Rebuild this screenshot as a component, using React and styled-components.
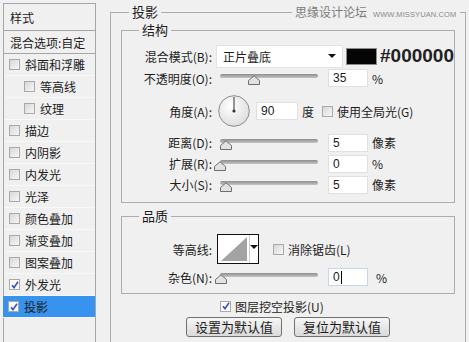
import React from "react";
import styled, { createGlobalStyle } from "styled-components";

const GlobalStyle = createGlobalStyle`
  html, body {
    margin: 0;
    padding: 0;
    background: #f0f0f0;
  }
  body {
    font-family: "Noto Sans CJK SC", "Noto Sans", sans-serif;
    font-size: 12px;
    color: #1c1c1c;
  }
`;

const sideItems = [
  { text: "斜面和浮雕" },
  { text: "等高线", indent: true },
  { text: "纹理", indent: true },
  { text: "描边" },
  { text: "内阴影" },
  { text: "内发光" },
  { text: "光泽" },
  { text: "颜色叠加" },
  { text: "渐变叠加" },
  { text: "图案叠加" },
  { text: "外发光", checked: true },
  { text: "投影", checked: true, selected: true },
];

function CheckBox({ checked }) {
  return (
    <Check checked={checked}>
      {checked && (
        <svg width="8" height="8" viewBox="0 0 8 8">
          <path d="M1 4.2 L3 6.6 L7 0.8" fill="none" stroke="#3a4fc0" strokeWidth="1.6" />
        </svg>
      )}
    </Check>
  );
}

function Slider({ value }) {
  return (
    <SliderWrap>
      <Track />
      <Knob style={{ left: `calc(${value}% - 6px)` }}>
        <svg width="12" height="10" viewBox="0 0 12 10">
          <path d="M0.5 9.5 L0.5 5.5 L6 0.8 L11.5 5.5 L11.5 9.5 Z" fill="#e2e2e2" stroke="#6e6e6e" />
        </svg>
      </Knob>
    </SliderWrap>
  );
}

function App() {
  return (
    <>
      <GlobalStyle />
      <Page>
        <Sidebar>
          <SideHead h={27}>样式</SideHead>
          <SideHead h={23}>混合选项:自定</SideHead>
          {sideItems.map((it) => (
            <SideItem key={it.text} indent={it.indent} selected={it.selected}>
              <CheckBox checked={it.checked} />
              <span>{it.text}</span>
            </SideItem>
          ))}
        </Sidebar>

        <Main>
          <Legend indent={8} size={13}>投影</Legend>

          <Group>
            <Legend indent={17} size={13}>结构</Legend>
            <Row h={24} mt={6}>
              <Label>混合模式(B):</Label>
              <Select>
                <span>正片叠底</span>
                <DropArrow />
              </Select>
              <Swatch />
              <HexText>#000000</HexText>
            </Row>
            <Row h={20}>
              <Label>不透明度(O):</Label>
              <Slider value={35} />
              <Field>35</Field>
              <Unit>%</Unit>
            </Row>
            <Row h={34} mt={6}>
              <Label>角度(A):</Label>
              <Dial>
                <svg width="32" height="32" viewBox="0 0 32 32">
                  <defs>
                    <radialGradient id="dialg" cx="0.4" cy="0.35" r="0.7">
                      <stop offset="0" stopColor="#ffffff" />
                      <stop offset="1" stopColor="#dcdcdc" />
                    </radialGradient>
                  </defs>
                  <circle cx="16" cy="16" r="15.3" fill="url(#dialg)" stroke="#8c8c8c" />
                  <line x1="16" y1="16" x2="16" y2="2" stroke="#333" strokeWidth="1" />
                  <circle cx="16" cy="16" r="1.6" fill="#333" />
                </svg>
              </Dial>
              <Field w={42} ml={6}>90</Field>
              <Unit>度</Unit>
              <CheckSlot ml={8}>
                <CheckBox />
              </CheckSlot>
              <Text>使用全局光(G)</Text>
            </Row>
            <Row h={21} mt={4}>
              <Label>距离(D):</Label>
              <Slider value={6} />
              <Field>5</Field>
              <Unit>像素</Unit>
            </Row>
            <Row h={21}>
              <Label>扩展(R):</Label>
              <Slider value={0} />
              <Field>0</Field>
              <Unit>%</Unit>
            </Row>
            <Row h={21}>
              <Label>大小(S):</Label>
              <Slider value={6} />
              <Field>5</Field>
              <Unit>像素</Unit>
            </Row>
            <Spacer h={7} />
          </Group>

          <Group mt={5}>
            <Legend indent={17} size={13}>品质</Legend>
            <Row h={30} mt={10}>
              <Label>等高线:</Label>
              <Contour>
                <ContourPreview>
                  <svg width="30" height="28" viewBox="0 0 30 28">
                    <polygon points="2,26 28,2 28,26" fill="#a3a3a3" />
                  </svg>
                </ContourPreview>
                <ContourArrow>
                  <DropArrow />
                </ContourArrow>
              </Contour>
              <CheckSlot ml={14}>
                <CheckBox />
              </CheckSlot>
              <Text>消除锯齿(L)</Text>
            </Row>
            <Row h={18} mt={4}>
              <Label>杂色(N):</Label>
              <Slider value={1} />
              <Field focus>
                0<Caret />
              </Field>
              <Unit ml={8}>%</Unit>
            </Row>
            <Spacer h={7} />
          </Group>

          <FooterCheck>
            <CheckBox checked />
            <Text>图层挖空投影(U)</Text>
          </FooterCheck>
          <Buttons>
            <Button>设置为默认值</Button>
            <Button>复位为默认值</Button>
          </Buttons>
        </Main>

        <Watermark>
          思缘设计论坛<small>WWW.MISSYUAN.COM</small>
        </Watermark>
      </Page>
    </>
  );
}

export default App;

const Page = styled.div`
  position: relative;
  width: 469px;
  height: 342px;
  overflow: hidden;
  box-sizing: border-box;
  padding: 3px 0 0 3px;
  display: flex;
  align-items: flex-start;
`;

const Sidebar = styled.div`
  width: 93px;
  height: 360px;
  box-sizing: border-box;
  border: 1px solid #a6a6a6;
  display: flex;
  flex-direction: column;
`;

const SideHead = styled.div`
  height: ${(p) => p.h}px;
  box-sizing: border-box;
  border-bottom: 1px solid #a6a6a6;
  display: flex;
  align-items: center;
  padding-left: 6px;
  white-space: nowrap;
  font-size: 12px;
`;

const SideItem = styled.div`
  height: 22px;
  box-sizing: border-box;
  display: flex;
  align-items: center;
  gap: 5px;
  padding-left: ${(p) => (p.indent ? 20 : 5)}px;
  border-bottom: 1px solid #f8f8f8;
  background: ${(p) => (p.selected ? "#3793ee" : "transparent")};
  margin-left: ${(p) => (p.selected ? "-1px" : "0")};
  font-size: 12px;
`;

const Check = styled.span`
  width: 11px;
  height: 11px;
  box-sizing: border-box;
  flex-shrink: 0;
  border: 1px solid #a9a9a9;
  background: ${(p) =>
    p.checked ? "#fbfbfb" : "linear-gradient(135deg, #d8d8d8, #f7f7f7)"};
  display: inline-flex;
  align-items: center;
  justify-content: center;
`;

const Main = styled.fieldset`
  position: relative;
  margin: 1px 0 0 14px;
  width: 356px;
  height: 345px;
  box-sizing: border-box;
  min-inline-size: 0;
  border: 1px solid #adadad;
  border-bottom: none;
  padding: 2px 10px 0 10px;
`;

const Legend = styled.legend`
  margin-left: ${(p) => p.indent}px;
  padding: 0 3px;
  font-size: ${(p) => p.size}px;
  line-height: 16px;
`;

const Group = styled.fieldset`
  margin: ${(p) => p.mt || 0}px 0 0 0;
  padding: 0;
  min-inline-size: 0;
  border: 1px solid #adadad;
  display: flex;
  flex-direction: column;
`;

const Row = styled.div`
  display: flex;
  align-items: center;
  height: ${(p) => p.h}px;
  margin-top: ${(p) => p.mt || 0}px;
  white-space: nowrap;
`;

const Spacer = styled.div`
  height: ${(p) => p.h}px;
`;

const Label = styled.div`
  width: 90px;
  flex-shrink: 0;
  text-align: right;
  font-size: 12px;
`;

const Select = styled.div`
  margin-left: 4px;
  width: 134px;
  height: 23px;
  box-sizing: border-box;
  background: #fff;
  border: 1px solid #e2e2e2;
  display: flex;
  align-items: center;
  justify-content: space-between;
  padding: 0 6px 0 6px;
  font-size: 12px;
`;

const DropArrow = styled.span`
  width: 0;
  height: 0;
  border-left: 4px solid transparent;
  border-right: 4px solid transparent;
  border-top: 4px solid #111;
`;

const Swatch = styled.div`
  margin-left: 3px;
  width: 33px;
  height: 17px;
  box-sizing: border-box;
  background: #050505;
  border: 1px solid #8a8a8a;
`;

const HexText = styled.div`
  margin-left: 3px;
  font-family: "Liberation Sans", Arial, sans-serif;
  font-weight: bold;
  font-size: 19px;
  color: #222;
`;

const SliderWrap = styled.div`
  position: relative;
  margin-left: 8px;
  width: 98px;
  height: 18px;
  flex-shrink: 0;
`;

const Track = styled.div`
  position: absolute;
  left: 0;
  right: 0;
  top: 5px;
  height: 4px;
  border-radius: 2px;
  background: linear-gradient(#8e8e8e, #c4c4c4);
`;

const Knob = styled.div`
  position: absolute;
  top: 6px;
  width: 12px;
  height: 10px;
  line-height: 0;
`;

const Field = styled.div`
  margin-left: ${(p) => (p.ml === undefined ? 10 : p.ml)}px;
  width: ${(p) => p.w || 40}px;
  height: 18px;
  box-sizing: border-box;
  flex-shrink: 0;
  background: #fff;
  border: 1px solid ${(p) => (p.focus ? "#c6d6e8" : "#e0e0e0")};
  display: flex;
  align-items: center;
  padding-left: 4px;
  font-family: "Liberation Sans", Arial, sans-serif;
  font-size: 12px;
`;

const Caret = styled.span`
  display: inline-block;
  width: 1px;
  height: 13px;
  margin-left: 1px;
  background: #000;
`;

const Unit = styled.span`
  margin-left: ${(p) => p.ml || 4}px;
  font-size: 12px;
`;

const Dial = styled.div`
  margin-left: 6px;
  width: 32px;
  height: 32px;
  line-height: 0;
  flex-shrink: 0;
`;

const CheckSlot = styled.span`
  margin-left: ${(p) => p.ml}px;
  display: inline-flex;
`;

const Text = styled.span`
  margin-left: 4px;
  font-size: 12px;
`;

const Contour = styled.div`
  margin-left: 5px;
  height: 30px;
  box-sizing: border-box;
  border: 1px solid #111;
  display: flex;
  background: #fff;
`;

const ContourPreview = styled.div`
  width: 31px;
  line-height: 0;
  display: flex;
  align-items: center;
  justify-content: center;
`;

const ContourArrow = styled.div`
  width: 9px;
  border-left: 1px solid #cfcfcf;
  display: flex;
  justify-content: center;
  padding-top: 10px;
  box-sizing: border-box;
`;

const FooterCheck = styled.div`
  margin-top: 5px;
  height: 14px;
  padding-left: 99px;
  display: flex;
  align-items: center;
  white-space: nowrap;
`;

const Buttons = styled.div`
  margin-top: 4px;
  padding-left: 65px;
  display: flex;
  gap: 12px;
`;

const Button = styled.button`
  width: 96px;
  height: 20px;
  padding: 0;
  border: 1px solid #707070;
  border-radius: 3px;
  background: linear-gradient(#f6f6f6, #dadada);
  font-family: "Noto Sans CJK SC", sans-serif;
  font-size: 13px;
  color: #1c1c1c;
  line-height: 18px;
`;

const Watermark = styled.div`
  position: absolute;
  left: 292px;
  top: 4px;
  padding: 0 4px 0 3px;
  background: #f0f0f0;
  color: #7c7c7c;
  font-size: 12px;
  line-height: 16px;
  white-space: nowrap;

  small {
    margin-left: 6px;
    font-family: "Liberation Sans", Arial, sans-serif;
    font-size: 7.5px;
    letter-spacing: 0.1px;
    color: #8a8a8a;
  }
`;
